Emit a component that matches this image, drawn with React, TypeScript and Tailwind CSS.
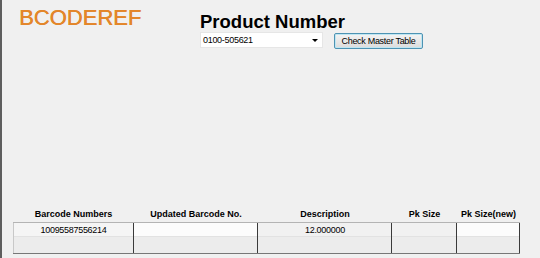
import React from 'react';

const columns = [
  { title: 'Barcode Numbers', width: 'w-[121px]', value: '10095587556214', align: 'center', editable: false, first: true },
  { title: 'Updated Barcode No.', width: 'w-[124px]', value: '', align: 'center', editable: true, first: false },
  { title: 'Description', width: 'w-[134px]', value: '12.000000', align: 'left', editable: false, first: false },
  { title: 'Pk Size', width: 'w-[65px]', value: '', align: 'center', editable: false, first: false },
  { title: 'Pk Size(new)', width: 'w-[63px]', value: '', align: 'center', editable: true, first: false },
];

export default function App() {
  return (
    <div
      className="w-[540px] h-[258px] bg-[#f0f0f0] border-l-2 border-[#5e5e5e] flex flex-col overflow-hidden text-black"
      style={{ fontFamily: '"Liberation Sans", Arial, sans-serif' }}
    >
      {/* Header */}
      <div className="flex">
        <div className="w-[198px] pl-[17px] pt-[7px]">
          <h1 className="text-[22px] leading-[22px] text-[#e3862a] [text-shadow:0.4px_0_0_#e3862a]">BCODEREF</h1>
        </div>
        <div className="pt-[12px]">
          <h2 className="text-[18.5px] leading-[19px] font-bold">Product Number</h2>
          <div className="flex items-start">
            <div className="mt-[1px] w-[123px] h-[16px] bg-white border border-[#e6e6e6] flex items-center justify-between pl-[2px] pr-[4px]">
              <span className="text-[9px] tracking-[-0.3px] leading-none">0100-505621</span>
              <span className="w-0 h-0 border-l-[3px] border-r-[3px] border-t-[3px] border-l-transparent border-r-transparent border-t-black"></span>
            </div>
            <button className="ml-[11px] mt-[2px] w-[89px] h-[16px] rounded-[2px] border border-[#4e93b3] bg-gradient-to-b from-[#f4f4f4] to-[#dcdcdc] shadow-[inset_0_0_0_1px_#bfe6f2] flex items-center justify-center">
              <span className="text-[9px] tracking-[-0.3px] leading-none">Check Master Table</span>
            </button>
          </div>
        </div>
      </div>

      <div className="flex-1"></div>

      {/* Grid */}
      <div className="pl-[11px] pb-[4px]">
        <div className="flex w-fit h-[16px] items-center">
          {columns.map((col) => (
            <div
              key={col.title}
              className={`${col.width} text-center text-[9px] font-bold leading-none whitespace-nowrap`}
            >
              {col.title}
            </div>
          ))}
        </div>
        <div className="flex w-fit border-t border-[#b4b4b4] border-b border-b-[#777]">
          {columns.map((col) => (
            <div
              key={col.title}
              className={`${col.width} h-[30px] flex flex-col ${
                col.first ? 'border-l border-[#c8c8c8] border-r border-r-[#3a3a3a]' : 'border-r border-[#3a3a3a]'
              }`}
            >
              <div
                className={`h-[14px] leading-[15px] text-[9px] tracking-[-0.3px] whitespace-nowrap border-b border-[#e2e2e2] ${
                  col.editable ? 'bg-[#fcfcfc]' : col.first ? 'bg-[#f5f5f5]' : 'bg-[#f1f1f1]'
                } ${col.align === 'left' ? 'pl-[47px]' : 'text-center'}`}
              >
                {col.value}
              </div>
              <div className="flex-1 bg-[#ececec]"></div>
            </div>
          ))}
        </div>
      </div>
    </div>
  );
}
